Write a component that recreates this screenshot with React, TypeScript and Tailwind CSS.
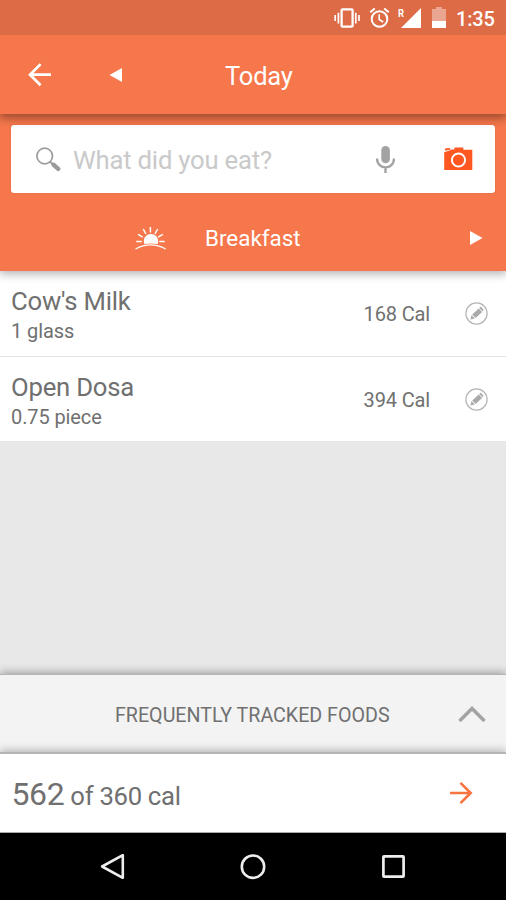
import { FC } from 'react';

interface FoodEntry {
  name: string;
  quantity: string;
  calories: number;
}

const entries: FoodEntry[] = [
  { name: "Cow's Milk", quantity: '1 glass', calories: 168 },
  { name: 'Open Dosa', quantity: '0.75 piece', calories: 394 },
];

const StatusBar: FC = () => (
  <div className="relative z-20 flex h-[35px] shrink-0 items-center justify-end bg-[#dd6b46] pr-[11px] text-white">
    <svg className="h-5 w-[26px]" viewBox="0 0 26 20" fill="none" stroke="currentColor" strokeWidth="1.7">
      <rect x="7.6" y="1.3" width="11" height="17.4" rx="1" strokeWidth="2.3" />
      <path d="M1.2 7v6M4.4 4.8v10.6M21.8 4.8v10.6M25 7v6" />
    </svg>
    <svg className="ml-[9px] h-[21px] w-[21px]" viewBox="0 0 21 21" fill="none" stroke="currentColor" strokeWidth="2">
      <circle cx="10.5" cy="12" r="7.8" />
      <path d="M1.2 5.2 5.8 1.4M19.8 5.2 15.2 1.4" />
      <path d="M10.2 7.2v5.3l4 2.5" strokeWidth="1.6" />
    </svg>
    <div className="relative ml-[8px] h-5 w-[23px]">
      <svg className="h-5 w-[23px]" viewBox="0 0 23 20" fill="currentColor">
        <path d="M23 0v20H3z" />
      </svg>
      <span className="absolute left-0 top-0 origin-left scale-x-[0.82] text-[11.5px] font-bold leading-[10px]">R</span>
    </div>
    <svg className="ml-[11px] h-[21px] w-[14px]" viewBox="0 0 14 21" fill="currentColor">
      <path d="M4 0h6v2h4v12H0V2h4z" opacity="0.4" />
      <path d="M0 14h14v7H0z" />
    </svg>
    <span className="ml-[10px] w-[39px] pt-[2px] text-[20px] font-medium leading-none tracking-[-0.2px]">1:35</span>
  </div>
);

const AppBar: FC = () => (
  <header className="relative z-10 flex h-[79px] shrink-0 items-center bg-[#f6774b] text-white shadow-[0_3px_9px_1px_rgba(0,0,0,0.38)]">
    <svg className="ml-7 h-6 w-6" viewBox="0 0 24 24" fill="none" stroke="currentColor" strokeWidth="2.7">
      <path d="M23 11.7H2M12.6 1.1 2 11.7l10.6 10.6" />
    </svg>
    <svg className="ml-[57px] h-[14px] w-[13px]" viewBox="0 0 13 14" fill="currentColor">
      <path d="M13 0v14L.5 7z" />
    </svg>
    <h1 className="ml-[103px] pt-1 text-[25.5px] leading-none tracking-[-0.2px]">Today</h1>
  </header>
);

const SearchBox: FC = () => (
  <div className="mx-[11px] mt-[11px] flex h-[68px] items-center rounded-[3px] bg-white shadow-[0_0_2px_rgba(0,0,0,0.15)]">
    <svg className="ml-[25px] h-[25px] w-[25px]" viewBox="0 0 25 25" fill="none" stroke="#9b9b9b">
      <circle cx="8.7" cy="9" r="7.8" strokeWidth="1.7" />
      <path d="m14 14.5 3.5 3.5" strokeWidth="2" />
      <path d="m17.7 17.9 4.5 4" strokeWidth="4.4" strokeLinecap="round" />
    </svg>
    <span className="ml-3 pt-[3px] text-[25.7px] leading-none tracking-[-0.22px] text-[#c9c9c9]">What did you eat?</span>
    <svg className="ml-auto h-[27px] w-[19px]" viewBox="0 0 19 27">
      <rect x="5.3" y="0" width="8.6" height="17.3" rx="4.3" fill="#a3a3a3" />
      <path d="M1 12.6c0 11.7 17 11.7 17 0M9.5 21v6" fill="none" stroke="#a3a3a3" strokeWidth="2.4" />
    </svg>
    <svg className="ml-[49px] mr-[22px] h-6 w-[29px]" viewBox="0 0 29 24">
      <path d="M.2 5.2 7 3.1V2.6h3.4V.4h8.9v2.4h9V23H.2z" fill="#ff5722" />
      <path d="M1.4 3.2V1.8L6 1.4v.9z" fill="#ff5722" stroke="#ff5722" strokeWidth=".8" />
      <circle cx="14.5" cy="13" r="6.6" fill="none" stroke="#fff" strokeWidth="2" />
    </svg>
  </div>
);

const MealPicker: FC = () => (
  <div className="flex h-[78px] items-center pt-[12px] text-white">
    <svg className="ml-[135px] h-[23px] w-[31px]" viewBox="0 0 31 23" fill="none" stroke="currentColor" strokeWidth="1.5">
      <path d="M9.2 17c-3-13.2 16.6-13.2 13.6 0q-6.8-1-13.6 0z" fill="currentColor" stroke="none" />
      <path d="M.5 22q15.2-8.2 30.2 0" strokeWidth="1.2" />
      <path d="M15.4 0v5.4M8.2 2l2.7 4.8M22.7 2 20 6.8M3 7.4l4.7 2.8M27.8 7.4l-4.7 2.8M1.3 14.5h5.5M24.2 14.5h5.5" />
    </svg>
    <span className="ml-[39px] pt-[1px] text-[22.4px] leading-none">Breakfast</span>
    <svg className="ml-auto mr-[23px] h-[14px] w-[13px]" viewBox="0 0 13 14" fill="currentColor">
      <path d="M0 0v14l12.5-7z" />
    </svg>
  </div>
);

const FoodRow: FC<{ entry: FoodEntry }> = ({ entry }) => (
  <li className="flex h-[86px] items-center border-b border-[#e4e4e4] bg-white pl-[11px] text-[#707070] last:h-[84px] last:border-b-0">
    <div className="pt-[5px]">
      <p className="text-[25.7px] leading-[30px] tracking-[-0.22px]">{entry.name}</p>
      <p className="text-[20px] leading-[30px] tracking-[-0.1px]">{entry.quantity}</p>
    </div>
    <span className="ml-auto pt-px text-[20px] leading-none tracking-[-0.15px]">{entry.calories} Cal</span>
    <svg className="ml-[35px] mr-[18px] h-[23px] w-[23px]" viewBox="0 0 23 23">
      <circle cx="11.5" cy="11.5" r="10.6" fill="none" stroke="#b5b5b5" strokeWidth="1.2" />
      <path d="m7.2 12.4 6.5-6 3.4 3.5-6.5 6zM14.2 5.9l1-.9q.5-.4.9 0l2.3 2.4q.4.5 0 .9l-.9.9zM6.5 13.1l3.3 3.4-4.4 1.1z" fill="#aaa" />
    </svg>
  </li>
);

const FrequentFoods: FC = () => (
  <div className="relative flex h-[78px] shrink-0 items-center border-t border-[#b5b5b5] bg-[#f3f3f3] text-[#707070] shadow-[0_-2px_8px_rgba(0,0,0,0.3)]">
    <span className="ml-[115px] pt-1 text-[19.65px] leading-none">FREQUENTLY TRACKED FOODS</span>
    <svg className="ml-auto mr-5 h-4 w-7" viewBox="0 0 28 16" fill="none" stroke="#a3a3a3" strokeWidth="3.5">
      <path d="M1.5 15 14 2.5 26.5 15" />
    </svg>
  </div>
);

const CalorieSummary: FC = () => (
  <div className="relative flex h-[81px] shrink-0 items-center border-b border-t-2 border-b-[#aaa] border-t-[#b5b5b5] bg-white text-[#707070] shadow-[0_-2px_8px_rgba(0,0,0,0.25)]">
    <p className="ml-[11.5px] pt-px text-[25.7px] leading-none tracking-[-0.3px]">
      <span className="text-[32px] tracking-[-0.4px]">562</span> of 360 cal
    </p>
    <svg className="ml-auto mr-[33px] h-6 w-6" viewBox="0 0 24 24" fill="none" stroke="#f7733f" strokeWidth="2.6">
      <path d="M1 12h21M11.5 1.8 21.7 12 11.5 22.2" />
    </svg>
  </div>
);

const NavBar: FC = () => (
  <nav className="flex h-[67px] shrink-0 items-center bg-black">
    <svg className="ml-[100px] h-[26px] w-[25px]" viewBox="0 0 25 26" fill="none" stroke="#eee" strokeWidth="2.6" strokeLinejoin="round">
      <path d="M22.8 1.2v22.6L2.1 12.5z" />
    </svg>
    <svg className="ml-[115px] h-[26px] w-[26px]" viewBox="0 0 26 26" fill="none" stroke="#eee" strokeWidth="2.6">
      <circle cx="13" cy="12.7" r="11.2" />
    </svg>
    <svg className="ml-[116px] h-[23px] w-[23px]" viewBox="0 0 23 23" fill="none" stroke="#eee" strokeWidth="2.7">
      <rect x="1.4" y="1.4" width="20.2" height="20.2" rx=".6" />
    </svg>
  </nav>
);

const App: FC = () => {
  return (
    <div className="flex h-[900px] w-[506px] flex-col overflow-hidden bg-[#e8e8e8] font-['Roboto',sans-serif]">
      <StatusBar />
      <AppBar />
      <section className="relative h-[157px] shrink-0 bg-[#f6774b] shadow-[0_2px_9px_1px_rgba(0,0,0,0.3)]">
        <SearchBox />
        <MealPicker />
      </section>
      <ul className="h-[170px] shrink-0">
        {entries.map((entry) => (
          <FoodRow key={entry.name} entry={entry} />
        ))}
      </ul>
      <div className="flex-1" />
      <FrequentFoods />
      <CalorieSummary />
      <NavBar />
    </div>
  );
};

export default App;
